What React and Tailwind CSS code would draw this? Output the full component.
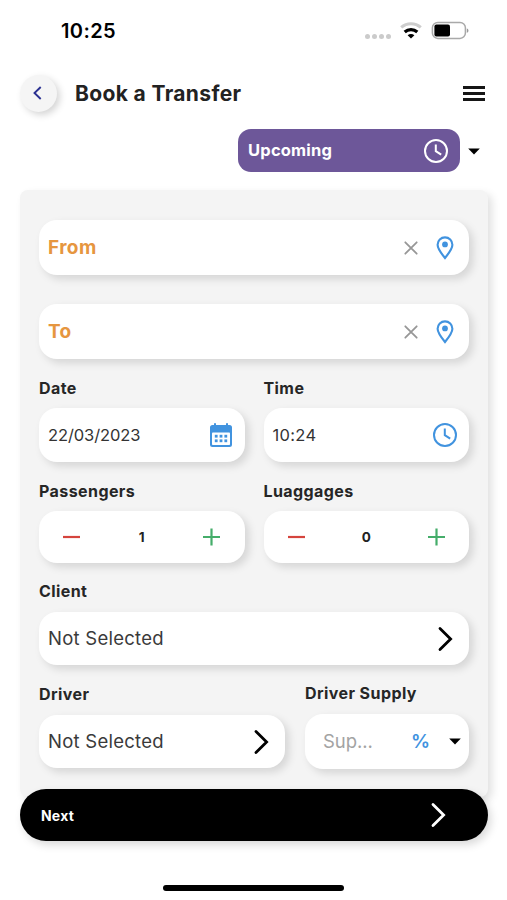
const CARD = "bg-white rounded-[18px] shadow-[4px_4px_8px_rgba(0,0,0,0.13)] flex items-center";

function StatusBar() {
  return (
    <div className="h-[62px] flex items-center justify-between pl-[61px] pr-[38px]">
      <div className="text-[20px] font-semibold leading-6 text-black tracking-[0.4px]">10:25</div>
      <div className="flex items-center">
        <div className="flex gap-[2px] mt-[10px] mr-[9px]">
          {[0, 1, 2, 3].map((i) => (
            <span key={i} className="size-[5px] rounded-full bg-[#cbcbcb]" />
          ))}
        </div>
        <svg className="mr-[9px]" width="22" height="18" viewBox="0 0 22 18" fill="none">
          <path d="M1.2 5.4C6.8 .4 15.2 .4 20.8 5.4" stroke="#cdcdcd" strokeWidth="3" />
          <path d="M4.7 10C8.4 6.7 13.6 6.7 17.3 10" stroke="#000" strokeWidth="3.2" />
          <path d="M7.6 13.2C9.6 11.5 12.4 11.5 14.4 13.2L11 16.6Z" fill="#000" />
        </svg>
        <svg width="38" height="20" viewBox="0 0 38 20" fill="none">
          <rect x="1.4" y="1.4" width="33" height="16" rx="5.4" stroke="#a9a9a9" strokeWidth="1.5" />
          <rect x="3.4" y="3.5" width="15.6" height="12" rx="2" fill="#000" />
          <path d="M35.8 7.5v4.2c2.2-.5 2.2-3.7 0-4.2Z" fill="#999" />
        </svg>
      </div>
    </div>
  );
}

function Clock() {
  return (
    <svg width="26" height="26" viewBox="0 0 26 26" fill="none" stroke="currentColor" strokeWidth="2">
      <circle cx="13" cy="13" r="11" />
      <path d="M12.8 6.6V13.2L18.2 16.7" />
    </svg>
  );
}

function Pin() {
  return (
    <svg width="18" height="24" viewBox="0 0 18 24" fill="none">
      <path d="M9 22C5.2 17.4 1.6 13 1.6 8.8a7.4 7.4 0 0 1 14.8 0C16.4 13 12.8 17.4 9 22Z" stroke="#4193df" strokeWidth="2.1" />
      <circle cx="9" cy="8.4" r="2.9" fill="#4193df" />
    </svg>
  );
}

function Calendar() {
  return (
    <svg width="22" height="24" viewBox="0 0 22 24">
      <path d="M2.5 2H4V.8Q4 0 5 0T6 .8V2H16V.8Q16 0 17 0T18 .8V2H19.5Q22 2 22 4.5V21.5Q22 24 19.5 24H2.5Q0 24 0 21.5V4.5Q0 2 2.5 2Z" fill="#4193df" />
      <rect x="2" y="9.4" width="18" height="12.6" rx=".8" fill="#fff" />
      {[4.8, 9.6, 14.4].map((x) =>
        [11.8, 16.4].map((y) => (
          <rect key={`${x}-${y}`} x={x} y={y} width="2.8" height="2.8" fill="#4193df" />
        ))
      )}
    </svg>
  );
}

function Chevron() {
  return (
    <svg width="15" height="26" viewBox="0 0 15 26" fill="none" stroke="currentColor" strokeWidth="2.8" strokeLinecap="round">
      <path d="M2 2.6L12.6 13L2 23.4" />
    </svg>
  );
}

function Caret() {
  return (
    <svg width="12" height="7" viewBox="0 0 12 7">
      <path d="M.2 .5H11.8L6 6.5Z" fill="#000" />
    </svg>
  );
}

function Label({ children }) {
  return <div className="h-5 text-[16px] leading-5 font-bold tracking-[0.42px] text-[#262626]">{children}</div>;
}

function Place({ name }) {
  return (
    <div className={`${CARD} h-[55px] pl-[9px] pr-[15px]`}>
      <span className="flex-1 pt-[2px] text-[19px] font-bold tracking-[0.4px] text-[#e6963f]">{name}</span>
      <svg className="mr-[18px]" width="14" height="14" viewBox="0 0 14 14" stroke="#979797" strokeWidth="1.8" strokeLinecap="round">
        <path d="M1.3 1.3L12.7 12.7M12.7 1.3L1.3 12.7" />
      </svg>
      <Pin />
    </div>
  );
}

function Counter({ value }) {
  return (
    <div className={`${CARD} h-[52px] justify-between px-[23px]`}>
      <svg width="19" height="18" viewBox="0 0 19 18">
        <path d="M1 9H18" stroke="#d5443d" strokeWidth="2.2" />
      </svg>
      <span className="text-[13.5px] font-bold text-[#222]">{value}</span>
      <svg width="19" height="18" viewBox="0 0 19 18">
        <path d="M1 9H18M9.5 .5V17.5" stroke="#45ad6a" strokeWidth="2.2" />
      </svg>
    </div>
  );
}

export default function App() {
  return (
    <div className="w-[507px] h-[900px] overflow-hidden bg-white font-['Inter',sans-serif] text-[#222]">
      <StatusBar />

      <div className="h-[62px] flex items-center pl-5 pr-[22px]">
        <div className="size-[37px] rounded-full bg-[#f5f5f5] shadow-[3px_3px_7px_rgba(0,0,0,0.17)] flex items-center justify-center pr-[2px]">
          <svg width="9" height="14" viewBox="0 0 9 14" fill="none">
            <path d="M7.7 1L1.5 7L7.7 13" stroke="#2b3191" strokeWidth="1.9" />
          </svg>
        </div>
        <h1 className="flex-1 ml-[18px] pt-[2px] text-[21px] font-bold tracking-[0.36px]">Book a Transfer</h1>
        <div className="flex flex-col gap-[3px]">
          <span className="h-[3px] w-[22px] bg-[#161616]" />
          <span className="h-[3px] w-[22px] bg-[#161616]" />
          <span className="h-[3px] w-[22px] bg-[#161616]" />
        </div>
      </div>

      <div className="h-[66px] pt-[5px] flex justify-end pr-[27px]">
        <div className="w-[222px] h-[43px] rounded-[13px] bg-[#6d5799] text-white flex items-center justify-between pl-[10px] pr-[11px]">
          <span className="text-[16.5px] font-bold tracking-[0.2px]">Upcoming</span>
          <Clock />
        </div>
        <div className="h-[43px] flex items-center ml-2 pt-px">
          <Caret />
        </div>
      </div>

      <div className="mx-5 w-[468px] h-[607px] rounded-[8px] bg-[#f4f4f4] shadow-[4px_4px_8px_rgba(0,0,0,0.12)] pt-[30px] px-[19px]">
        <Place name="From" />
        <div className="mt-[29px]">
          <Place name="To" />
        </div>

        <div className="grid grid-cols-2 gap-x-[19px] mt-[19px]">
          <div>
            <Label>Date</Label>
            <div className={`${CARD} h-[54px] mt-[10px] pl-[9px] pr-[13px] justify-between`}>
              <span className="text-[16.5px] tracking-[-0.1px] text-[#333]">22/03/2023</span>
              <Calendar />
            </div>
          </div>
          <div>
            <Label>Time</Label>
            <div className={`${CARD} h-[54px] mt-[10px] pl-[9px] pr-[11px] justify-between text-[#4193df]`}>
              <span className="text-[16.5px] tracking-[0.3px] text-[#333]">10:24</span>
              <Clock />
            </div>
          </div>
        </div>

        <div className="grid grid-cols-2 gap-x-[19px] mt-[19px]">
          <div>
            <Label>Passengers</Label>
            <div className="mt-[10px]">
              <Counter value="1" />
            </div>
          </div>
          <div>
            <Label>Luaggages</Label>
            <div className="mt-[10px]">
              <Counter value="0" />
            </div>
          </div>
        </div>

        <div className="mt-[18px]">
          <Label>Client</Label>
          <div className={`${CARD} h-[53px] mt-[11px] pl-[9px] pr-[16px] justify-between`}>
            <span className="pt-px text-[18.5px] tracking-[0.25px] text-[#3a3a3a]">Not Selected</span>
            <span className="text-black"><Chevron /></span>
          </div>
        </div>

        <div className="flex gap-5 mt-[18px]">
          <div className="w-[246px] pt-px">
            <Label>Driver</Label>
            <div className={`${CARD} h-[53px] mt-[11px] pl-[9px] pr-[16px] justify-between`}>
              <span className="pt-px text-[18.5px] tracking-[0.25px] text-[#3a3a3a]">Not Selected</span>
              <span className="text-black"><Chevron /></span>
            </div>
          </div>
          <div className="flex-1">
            <Label>Driver Supply</Label>
            <div className={`${CARD} h-[55px] mt-[11px] pl-[18px] pr-[8px]`}>
              <span className="flex-1 text-[18.5px] tracking-[-0.05px] text-[#a3a3a3]">Sup...</span>
              <span className="pt-px text-[19px] font-semibold text-[#4193df] mr-[19px]">%</span>
              <Caret />
            </div>
          </div>
        </div>
      </div>

      <div className="relative mx-5 -mt-2 w-[468px] h-[52px] rounded-full bg-black text-white shadow-[3px_4px_8px_rgba(0,0,0,0.15)] flex items-center justify-between pl-[21px] pr-[42px]">
        <span className="text-[14px] font-bold tracking-[0.2px]">Next</span>
        <Chevron />
      </div>

      <div className="mt-[44px] mx-auto w-[181px] h-[6px] rounded-full bg-black" />
    </div>
  );
}
